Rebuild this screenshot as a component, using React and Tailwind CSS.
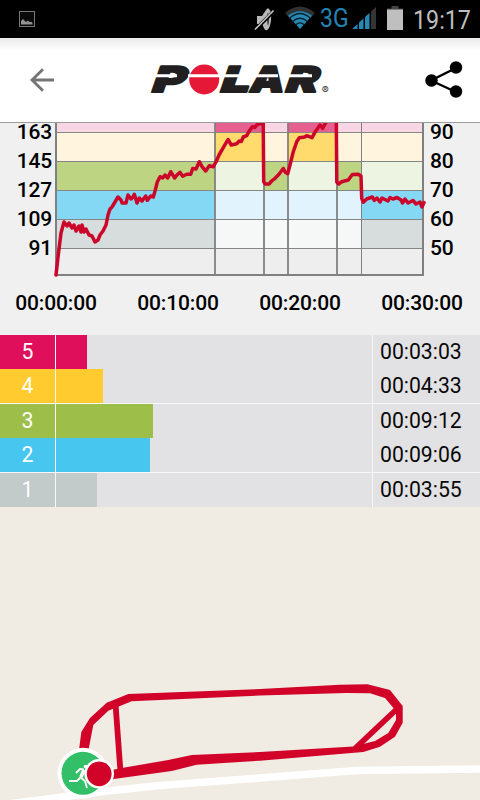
import React from "react";

const TRACE =
  "56,275 58.5,253 61,233 64,222 67,226 69,223 72,228 74,225 76,231 79,226 81,232 82,225 84,232 86,229 89,235 92,236 95,242 98,240 100,235 103,231 106,225 108,215 110,209 112,207 115,202 118,197 121,200 122,203 126,203 128,195 131,199 133,197 134.3,194.3 137,203 139.3,198 142,201 145.7,196 147.3,200.3 150.7,196 153.3,197 155.3,190 157.3,182 160,176.7 162.7,178 165,175 167.7,178 170.7,171.7 174.7,178 177,175 180,172.3 182.7,176.3 186.7,174.3 190.7,174.3 192.7,168.5 196,169 199.3,161.7 202,166.7 205.7,171 209.3,165.7 213.3,166.7 216,162 219,155 223.3,147.7 228,139.5 231.3,145 236.7,143.7 239.3,141 241.3,141.5 243.3,137 246.7,135.7 249.3,131 252.3,126.7 254.7,127.5 257.3,124.5 261.7,123 263.2,121 263.7,181.7 265.3,184 269,184 271.7,181 275,178.3 279,174.3 283.3,168.5 285.3,172.3 287.7,173.7 290,165 293.3,151.7 296.7,141.7 299.3,137.7 304.7,137 306.7,135.7 312,137.7 315.3,131.7 320,125 322.7,128.3 325.5,123 329,119 336.3,119 336.8,182 338.7,184 341.7,181.7 348.3,180 352.3,174.5 358.3,174.2 361,176 361.7,198.3 363.3,202.3 366.7,199 372.3,197 374.3,200.3 377,198 380,202 382,198 388,201 390,197.5 393,199 397,197.5 401,200 402.5,203 405,199 408,203 413,200.5 416,204 420,202 422,207 424,202.5";

const WEAK = ["#f8d6e3", "#fff5de", "#eef4e2", "#e1f4fd", "#f5f8f7", "#eeeeef"];
const STRONG = ["#e6608f", "#ffda6c", "#bdd583", "#84d8f3", "#d6dddc", "#eeeeef"];
const BAND_Y = [122, 132.5, 161.5, 190.5, 219.5, 248.5, 275];
const PHASES = [
  { x: 56, end: 215, zones: [2, 3, 4] },
  { x: 215, end: 264, zones: [0, 1] },
  { x: 264, end: 288, zones: [2] },
  { x: 288, end: 337, zones: [0, 1] },
  { x: 337, end: 361, zones: [2] },
  { x: 361, end: 423, zones: [3, 4] },
];

function StatusBar() {
  return (
    <div className="flex h-[38px] shrink-0 items-center bg-black leading-none">
      <svg className="ml-[19px]" width="16" height="16" viewBox="0 0 16 16">
        <rect x=".5" y=".5" width="15" height="15" fill="#090909" stroke="#777" />
        <path d="M2 13.500V10l2-2 1.500 1.500L7 11l2-1.500 1.500 1.500h2l1 1v1.500z" fill="#929292" />
      </svg>
      <svg className="ml-[219px]" width="21" height="38" viewBox="0 0 21 38">
        <path d="M3 16h5l4-6q2-3 3-1 3 3 2 11-1 9-4 10-2 1-3-2l-2-4H3z" fill="#b9b9b9" />
        <path d="M14 12q-2 7 0 14 2-7 0-14z" fill="#333" />
        <path d="M1 30 20 11" stroke="#000" strokeWidth="3.500" />
        <path d="M1 29.500 19.500 10.500" stroke="#c4c4c4" strokeWidth="1.700" />
      </svg>
      <svg className="ml-[9px]" width="32" height="38" viewBox="0 0 32 38" fill="none">
        <path d="M1 13Q16 0 31 13L26.500 18Q16 8.500 5.500 18Z" fill="#303132" />
        <path d="M4 15.800Q16 6.500 28 15.800L16 29Z" fill="#2688b3" />
        <path d="M5.500 18.300Q16 8.800 26.500 18.300M8.500 21.500Q16 15 23.500 21.500M11.500 25Q16 20.800 20.500 25" stroke="#06202d" strokeWidth="1.300" />
      </svg>
      <span className="mb-[2px] ml-[4px] w-[30px] origin-left scale-x-[.92] text-[25px] text-[#2384b4]">3G</span>
      <svg className="ml-[2px]" width="25" height="38" viewBox="0 0 25 38">
        <path d="M0 29l5.500-5v5zM7 29v-6.500l4.500-4V29zM13 29V17l4.500-4v16z" fill="#2688b3" />
        <path d="M19 29V11.500L24 7v22z" fill="#343434" />
      </svg>
      <svg className="ml-[10px]" width="16" height="38" viewBox="0 0 16 38">
        <path d="M4.500 6h7v2.500H16V30H0V8.500h4.500z" fill="#444" />
        <path d="M0 9.500h16V30H0z" fill="#bfbfbf" />
      </svg>
      <span className="ml-[10px] mt-[2px] origin-left scale-x-[.93] whitespace-nowrap text-[25px] text-[#bebebe]">19:17</span>
    </div>
  );
}

function PolarLogo() {
  return (
    <svg width="184" height="64" viewBox="148 48 184 64" fontFamily="Inter, sans-serif" fontWeight="900">
      <g fill="#211f20" stroke="#211f20" strokeWidth="2" strokeLinejoin="round" fontSize="35.500">
        <text transform="translate(150 92.300) skewX(-19)" textLength="33" lengthAdjust="spacingAndGlyphs">P</text>
        <text transform="translate(218.500 92.300) skewX(-19)" textLength="29" lengthAdjust="spacingAndGlyphs">L</text>
        <text transform="translate(248.500 92.300) skewX(-10)" textLength="34" lengthAdjust="spacingAndGlyphs">A</text>
        <text transform="translate(283.500 92.300) skewX(-19)" textLength="32" lengthAdjust="spacingAndGlyphs">R</text>
      </g>
      <circle cx="204.200" cy="79.500" r="15" fill="#e51837" />
      <path d="M150 75.700h27M188 75.700h90M288 75.700h24" stroke="#fff" strokeWidth="3" />
      <text x="321.800" y="94" fontSize="10.500" fontWeight="400" fill="#333">®</text>
    </svg>
  );
}

function Header() {
  return (
    <div className="flex h-[84px] shrink-0 items-center bg-linear-to-b from-[#ebebeb] via-white via-15% to-white">
      <svg className="ml-[30px]" width="25" height="24" viewBox="0 0 25 24">
        <path d="M13 1.300 2 12l11 10.700M2 12h22" fill="none" stroke="#757575" strokeWidth="2.800" />
      </svg>
      <div className="ml-[93px]"><PolarLogo /></div>
      <svg className="ml-[93px]" width="38" height="38" viewBox="0 0 38 38">
        <path d="m31 7-25 12.500L31 31" fill="none" stroke="#000" strokeWidth="2.400" />
        <circle cx="6.500" cy="19.500" r="6.200" />
        <circle cx="31" cy="6.500" r="6.200" />
        <circle cx="31" cy="30.500" r="6.200" />
      </svg>
    </div>
  );
}

function AxisLabels({ values, className }) {
  return (
    <div className={className}>
      {values.map((v, i) => (
        <span key={v} className={i === 0 ? "h-[24px] leading-[19px]" : "h-[29px] leading-[29px]"}>{v}</span>
      ))}
    </div>
  );
}

function HeartRateChart() {
  return (
    <section className="h-[213px] shrink-0 overflow-hidden border-t border-[#9b9b9b] bg-[#f0f0f0] font-medium tracking-[-0.15px] text-[21px]">
      <div className="flex h-[165px]">
        <AxisLabels values={[163, 145, 127, 109, 91]} className="flex w-[53px] flex-col pr-px text-right" />
        <svg width="375" height="155" viewBox="53 123 375 155">
          {PHASES.map((p) =>
            WEAK.map((c, i) => (
              <rect key={`${p.x}-${i}`} x={p.x} y={BAND_Y[i]} width={p.end - p.x} height={BAND_Y[i + 1] - BAND_Y[i]} fill={p.zones.includes(i) ? STRONG[i] : c} />
            ))
          )}
          <path d="M56 132.500H423M56 161.500H423M56 190.500H423M56 219.500H423M56 248.500H423" stroke="#858585" strokeWidth="1" />
          <path d="M215 123V275M264 123V275M288 123V275M337 123V275" stroke="#808080" strokeWidth="1.800" />
          <path d="M361.500 123V275" stroke="#808080" strokeWidth="1" />
          <path d="M56 123V275H423V123" fill="none" stroke="#808080" strokeWidth="2" />
          <polyline points={TRACE} fill="none" stroke="#cc062b" strokeWidth="3.500" strokeLinejoin="round" strokeLinecap="round" />
        </svg>
        <AxisLabels values={[90, 80, 70, 60, 50]} className="ml-[2px] flex flex-col" />
      </div>
      <div className="-ml-[5px] flex w-[488px]">
        {["00:00:00", "00:10:00", "00:20:00", "00:30:00"].map((t) => (
          <span key={t} className="w-[122px] text-center leading-[30px]">{t}</span>
        ))}
      </div>
    </section>
  );
}

const ZONES = [
  { zone: 5, time: "00:03:03", bar: "w-[31px] bg-[#e00f5b]", label: "bg-[#e00f5b]", row: "" },
  { zone: 4, time: "00:04:33", bar: "w-[47px] bg-[#ffcb2f]", label: "bg-[#ffcb2f]", row: "" },
  { zone: 3, time: "00:09:12", bar: "w-[97px] bg-[#9dbf49]", label: "bg-[#9dbf49]", row: "border-t border-[#f7f7f7]" },
  { zone: 2, time: "00:09:06", bar: "w-[94px] bg-[#47c7ef]", label: "bg-[#47c7ef]", row: "" },
  { zone: 1, time: "00:03:55", bar: "w-[41px] bg-[#c2caca]", label: "bg-[#c2caca]", row: "border-t border-[#f7f7f7]" },
];

function ZoneTable() {
  return (
    <section className="shrink-0 bg-[#e2e2e4] text-[21.200px] leading-[34px]">
      {ZONES.map((z) => (
        <div key={z.zone} className={`box-content flex h-[34px] ${z.row}`}>
          <div className={`w-[55px] text-center text-white ${z.label}`}>{z.zone}</div>
          <div className="flex w-[318px] border-x border-[#f7f7f7]">
            <div className={z.bar} />
          </div>
          <div className="pl-[7px] text-[#090909]">{z.time}</div>
        </div>
      ))}
    </section>
  );
}

function RouteMap() {
  return (
    <svg className="block shrink-0" width="480" height="293" viewBox="0 507 480 293">
      <rect y="507" width="480" height="293" fill="#f0ece3" />
      <path d="M0 805 40 800 107 791 160 785.500 260 778 356 770.500 480 769" fill="none" stroke="#fff" strokeWidth="7.500" />
      <path
        fill="#d10329"
        d="M79 750 81.300 732 90 718 106.700 702.700 128.300 694 260 689 340 684.800 367.500 684.300 390 690 402.700 706 402.700 722.700 395 736.700 380 746.700 363.300 752 260 760.700 196.700 764.700 171.700 771 112 779.300V770L123.300 767.700 168.300 760 191.700 755 260 752 353.300 746.500 363 744 375 741 388.300 733 396 720 396 711 385 698 370 693.300 346 693 260 695.500 131.700 701.300 108.300 710.700 93.300 725 88.500 750Z"
      />
      <path d="M115.500 704 120.500 772M355 748.500 398 708" stroke="#d10329" strokeWidth="5.800" />
      <circle cx="83" cy="773.300" r="25.500" fill="#fff" />
      <circle cx="83" cy="773.300" r="21.500" fill="#32bf68" />
      <g fill="none" stroke="#fff" strokeWidth="1.800">
        <path d="m84 769.500-4-.5-4 4M83 771l-3 7-3 3h-8M80 777l5 4 2 7" />
        <path d="m84 770-3 7" strokeWidth="3.600" />
      </g>
      <circle cx="85.500" cy="766.500" r="1.800" fill="#fff" />
      <circle cx="99.200" cy="773.800" r="14.800" fill="#fff" />
      <circle cx="99.200" cy="773.800" r="12.400" fill="#d10329" />
    </svg>
  );
}

export default function App() {
  return (
    <main className="flex h-[800px] w-[480px] flex-col overflow-hidden bg-[#f0ece3] font-[Roboto,sans-serif] text-black">
      <StatusBar />
      <Header />
      <HeartRateChart />
      <ZoneTable />
      <RouteMap />
    </main>
  );
}
